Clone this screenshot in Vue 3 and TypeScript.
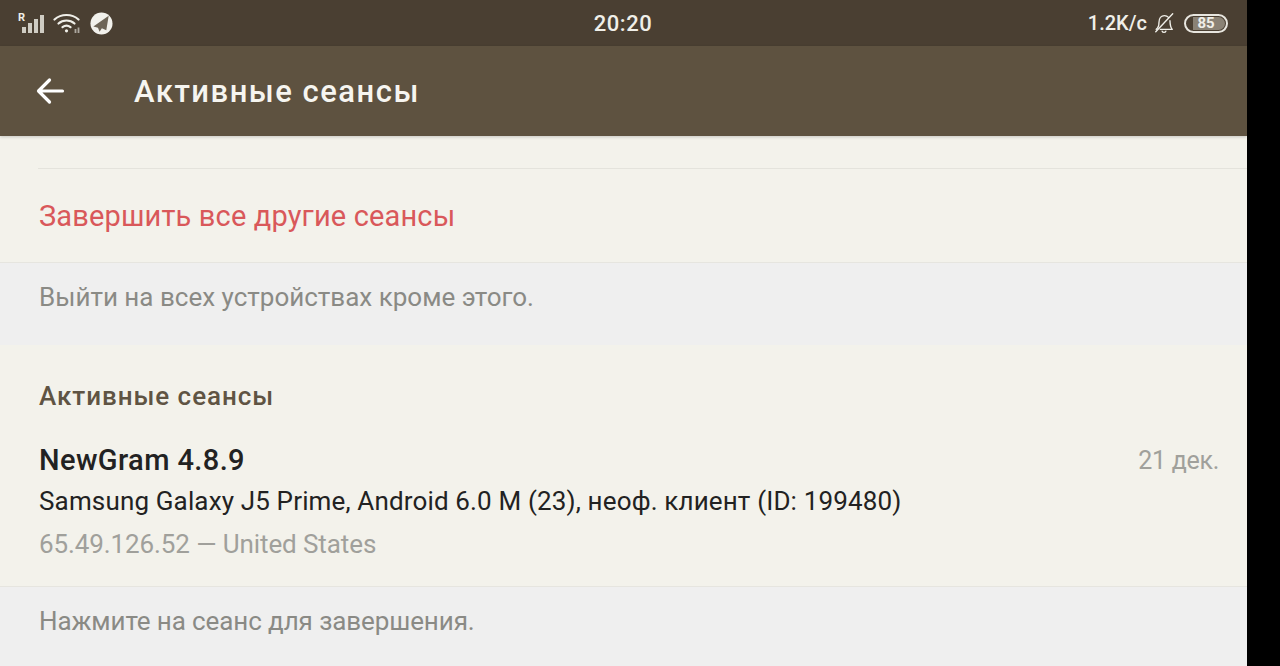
<script setup lang="ts">
const signalBars = [6, 10, 14, 18]
</script>

<template>
  <div class="screen">
    <div class="phone">
      <div class="status-bar">
        <div class="status-left">
          <div class="signal">
            <span class="roaming">R</span>
            <span v-for="h in signalBars" :key="h" class="bar" :style="{ height: h + 'px' }" />
          </div>
          <svg class="wifi" viewBox="0 0 28 22" fill="none" stroke="currentColor" stroke-width="2.2" stroke-linecap="round">
            <path d="M1.500 7.500C8 1.500 19 1.500 25.500 7.500" />
            <path d="M5.500 11.500C10 7.500 17 7.500 21.500 11.500" />
            <path d="M9.500 15.200C12 13.200 15 13.200 17.500 15.200" />
            <circle cx="13.500" cy="18.800" r="1.600" fill="currentColor" stroke="none" />
            <path d="M22.500 17v4M25.500 15.500v5.500" stroke-width="1.800" stroke-linecap="butt" opacity="0.6" />
          </svg>
          <svg class="telegram" viewBox="0 0 24 24">
            <circle cx="12" cy="12" r="11.500" fill="#f2f1ec" />
            <path d="M19.500 4 3.500 15l4.800 1.500 1.700 4 2.400-3.500 4.600 2z" fill="#6e6557" />
          </svg>
        </div>
        <span class="clock">20:20</span>
        <div class="status-right">
          <span class="speed">1.2K/c</span>
          <svg class="bell" viewBox="0 0 24 24" fill="none" stroke="currentColor" stroke-width="1.500" stroke-linecap="round" stroke-linejoin="round">
            <path d="M3.500 19c2-1.500 3-3.500 3-7.500C6.500 7 9 4 12.500 4c1.800 0 3.300.7 4.400 1.900" />
            <path d="M18.500 9.500c.1 4.500.8 7.500 2.500 9.500H8" />
            <path d="M10 21c.6 1.700 3.400 1.700 4 0" />
            <path d="M3 21.500 21.500 2" />
          </svg>
          <div class="battery"><span class="battery-fill" /><span class="battery-num">85</span></div>
        </div>
      </div>

      <header class="app-bar">
        <svg class="back" viewBox="0 0 30 30" fill="none" stroke="currentColor" stroke-width="3.200" stroke-linecap="round" stroke-linejoin="round">
          <path d="M27 15H3.500M14 4 3 15l11 11" />
        </svg>
        <h1 class="app-title">Активные сеансы</h1>
      </header>

      <section class="card card-terminate">
        <!-- scrolled under the app bar: only the glyph bottoms show in the reference, so this wording is a placeholder -->
        <div class="clipped-line">5.18.214.107 — Russia</div>
        <div class="terminate-row">Завершить все другие сеансы</div>
      </section>

      <div class="hint hint-first">Выйти на всех устройствах кроме этого.</div>

      <section class="card card-sessions">
        <div class="section-title">Активные сеансы</div>
        <div class="session">
          <div class="session-top">
            <span class="session-name">NewGram 4.8.9</span>
            <span class="session-date">21 дек.</span>
          </div>
          <div class="session-device">Samsung Galaxy J5 Prime, Android 6.0 M (23), неоф. клиент (ID: 199480)</div>
          <div class="session-ip">65.49.126.52 — United States</div>
        </div>
      </section>

      <div class="hint hint-last">Нажмите на сеанс для завершения.</div>
    </div>
  </div>
</template>

<style>
html, body {
  margin: 0;
  background: #000;
}
</style>

<style scoped>
.screen {
  width: 1280px;
  height: 666px;
  overflow: hidden;
  background: #000;
  font-family: Roboto, "Noto Sans", sans-serif;
}

.phone {
  width: 1247px;
  height: 666px;
  display: flex;
  flex-direction: column;
  background: #efefef;
}

.status-bar {
  height: 46px;
  flex-shrink: 0;
  display: grid;
  grid-template-columns: 1fr auto 1fr;
  align-items: center;
  padding: 0 19px 0 18px;
  background: #4a3f32;
  color: #f0efe9;
}

.status-left {
  display: flex;
  align-items: center;
  gap: 9px;
}

.signal {
  position: relative;
  display: flex;
  align-items: flex-end;
  gap: 2px;
  width: 26px;
  height: 19px;
  justify-content: flex-end;
}

.roaming {
  position: absolute;
  left: 0;
  top: -3px;
  font-size: 11px;
  font-weight: 700;
}

.bar {
  width: 4px;
  background: #cfccc3;
}

.bar:first-of-type {
  clip-path: polygon(0 100%, 100% 0, 100% 100%);
}

.wifi {
  width: 28px;
  height: 22px;
}

.telegram {
  width: 23px;
  height: 23px;
}

.clock {
  font-size: 22px;
  font-weight: 500;
  letter-spacing: 0.500px;
}

.status-right {
  display: flex;
  align-items: center;
  justify-content: flex-end;
  gap: 6px;
}

.speed {
  font-size: 20px;
  font-weight: 500;
}

.bell {
  width: 22px;
  height: 22px;
  margin-right: 3px;
}

.battery {
  position: relative;
  width: 44px;
  height: 19px;
  box-sizing: border-box;
  border: 2px solid #e8e6df;
  border-radius: 10px;
  display: flex;
  align-items: center;
  justify-content: center;
}

.battery-fill {
  position: absolute;
  left: 7px;
  right: 1px;
  top: 1px;
  bottom: 1px;
  background: #8a8275;
  border-radius: 0 7px 7px 0;
}

.battery-num {
  position: relative;
  font-size: 15px;
  font-weight: 700;
}

.app-bar {
  height: 90px;
  flex-shrink: 0;
  display: flex;
  align-items: center;
  gap: 68px;
  padding-left: 35px;
  background: #5e5240;
  color: #fff;
  box-shadow: 0 1px 3px rgba(0, 0, 0, 0.18);
  position: relative;
  z-index: 1;
}

.back {
  width: 31px;
  height: 30px;
}

.app-title {
  margin: 0;
  font-size: 31px;
  font-weight: 500;
  letter-spacing: 1.500px;
  color: #f6f5f0;
}

.card {
  background: #f3f2eb;
  flex-shrink: 0;
  overflow: hidden;
}

.card-terminate {
  height: 127px;
  box-sizing: border-box;
  border-bottom: 1px solid #e6e5df;
  padding-left: 38px;
}

.clipped-line {
  height: 32px;
  margin-top: -25px;
  padding-bottom: 25px;
  line-height: 32px;
  font-size: 25px;
  letter-spacing: 1px;
  color: #a5a49e;
  border-bottom: 1px solid #e4e3dc;
}

.terminate-row {
  height: 94px;
  display: flex;
  align-items: center;
  margin-left: 1px;
  font-size: 29px;
  letter-spacing: 0.150px;
  color: #d9585a;
}

.hint {
  padding-left: 39px;
  font-size: 26px;
  color: #8a8a85;
  display: flex;
  align-items: center;
  flex-shrink: 0;
}

.hint-first {
  height: 82px;
  padding-bottom: 14px;
  box-sizing: border-box;
}

.hint-last {
  flex: 1;
  padding-bottom: 12px;
  letter-spacing: -0.100px;
}

.card-sessions {
  height: 242px;
  box-sizing: border-box;
  border-bottom: 1px solid #e6e5df;
  padding: 35px 28px 0 39px;
}

.section-title {
  font-size: 26px;
  line-height: 32px;
  font-weight: 500;
  letter-spacing: 0.950px;
  color: #5f5443;
}

.session {
  margin-top: 27px;
}

.session-top {
  display: flex;
  justify-content: space-between;
  align-items: center;
  height: 42px;
}

.session-name {
  font-size: 29px;
  font-weight: 500;
  letter-spacing: 0.400px;
  color: #222;
}

.session-date {
  font-size: 25px;
  letter-spacing: -0.300px;
  color: #a0a09b;
}

.session-device {
  font-size: 26px;
  line-height: 41px;
  letter-spacing: 0.150px;
  color: #222;
}

.session-ip {
  font-size: 26px;
  line-height: 45px;
  letter-spacing: -0.100px;
  color: #a0a09b;
}
</style>
